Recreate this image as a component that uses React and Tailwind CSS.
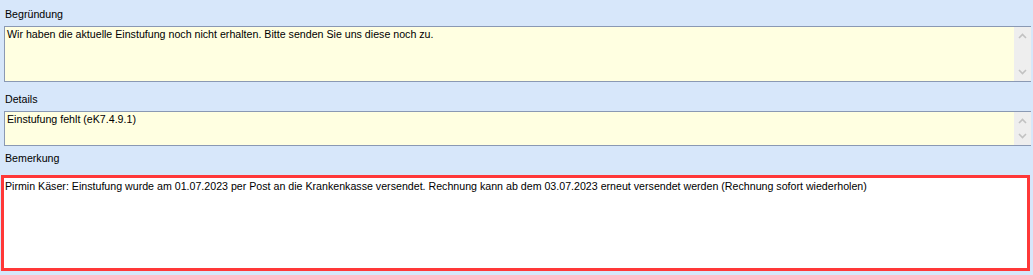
import React from 'react';

function ScrollBar() {
    return (
        <div className="w-[17px] shrink-0 bg-[#eeeeee] flex flex-col justify-between items-center py-[6px]">
            <svg width="9" height="6" viewBox="0 0 9 6">
                <path d="M1 5 L4.5 1.5 L8 5" fill="none" stroke="#c2c2c2" strokeWidth="1.6" />
            </svg>
            <svg width="9" height="6" viewBox="0 0 9 6">
                <path d="M1 1 L4.5 4.5 L8 1" fill="none" stroke="#c2c2c2" strokeWidth="1.6" />
            </svg>
        </div>
    );
}

function TextBox({ text, height }) {
    return (
        <div className={`flex border-y border-l border-[#8a99b3] bg-[#ffffe1] mr-[2px] ${height}`}>
            <div className="flex-1 px-[2px] pt-[1px] leading-[13px]">{text}</div>
            <ScrollBar />
        </div>
    );
}

export default function App() {
    return (
        <div
            className="w-[1033px] h-[275px] bg-[#d7e7fa] text-[10.65px] text-black flex flex-col"
            style={{ fontFamily: '"Liberation Sans", Arial, sans-serif' }}
        >
            <div className="pl-[4px] pt-[8px]">
                <div className="pl-[1px] leading-[13px] h-[18px]">Begründung</div>
                <TextBox
                    height="h-[56px]"
                    text="Wir haben die aktuelle Einstufung noch nicht erhalten. Bitte senden Sie uns diese noch zu."
                />
                <div className="pl-[1px] leading-[13px] mt-[11px] h-[18px]">Details</div>
                <TextBox height="h-[35px]" text="Einstufung fehlt (eK7.4.9.1)" />
                <div className="pl-[1px] leading-[13px] mt-[6px] h-[23px]">Bemerkung</div>
            </div>
            <div className="ml-[1px] mr-[3px] h-[96px] border-[3px] border-[#ff3838] bg-white px-[1px] pt-[2px] leading-[13px]">
                Pirmin Käser: Einstufung wurde am 01.07.2023 per Post an die Krankenkasse versendet. Rechnung kann ab dem 03.07.2023 erneut versendet werden (Rechnung sofort wiederholen)
            </div>
        </div>
    );
}
